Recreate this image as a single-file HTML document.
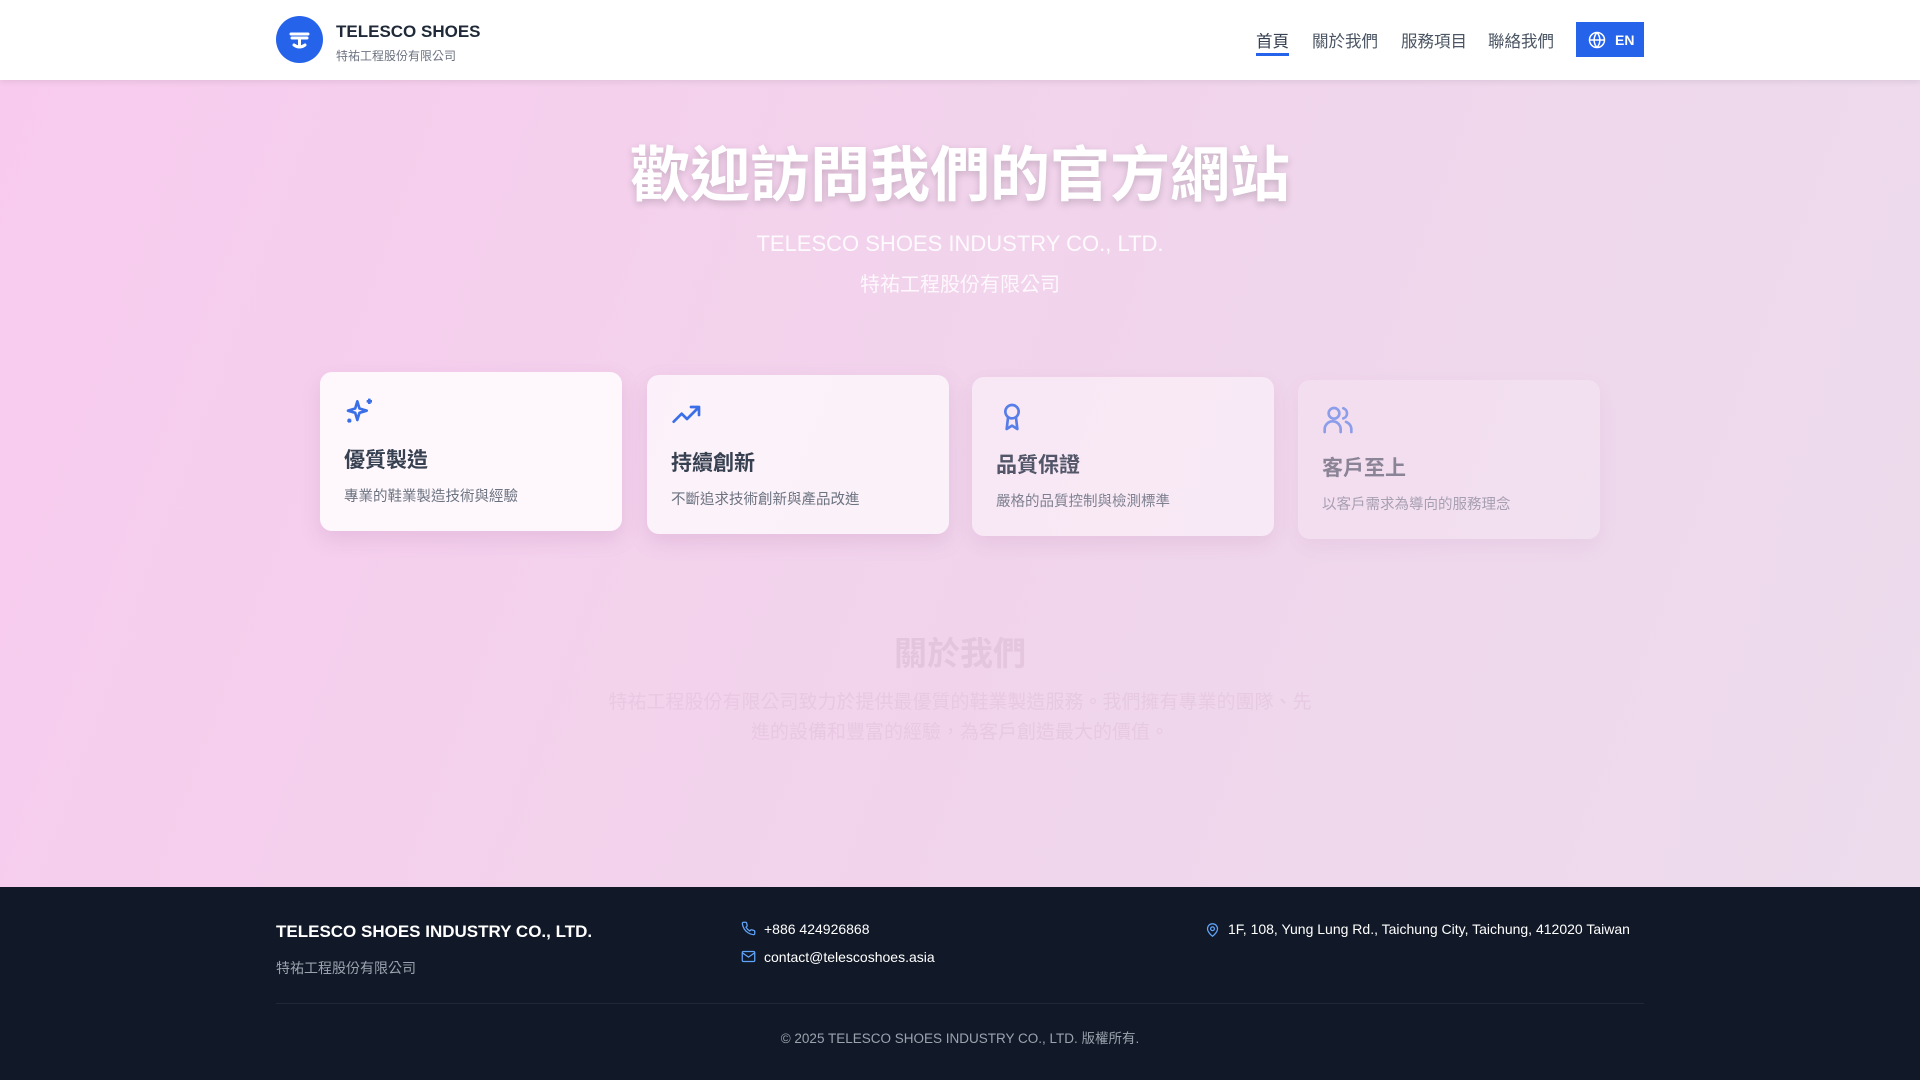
<!DOCTYPE html>
<html><head><meta charset="utf-8">
<style>
*{margin:0;padding:0;box-sizing:border-box}
body{width:1920px;height:1080px;overflow:hidden;font-family:"Liberation Sans","Noto Sans CJK TC",sans-serif;background:#111827}
.hdr{position:absolute;left:0;top:0;width:1920px;height:80px;background:#fff;box-shadow:0 2px 6px rgba(0,0,0,.08);z-index:5}
.logo{position:absolute;left:276px;top:16px;width:47px;height:47px;border-radius:50%;background:#2563eb}
.t1{position:absolute;left:336px;top:22px;font-size:17px;font-weight:bold;color:#1f2937}
.t2{position:absolute;left:336px;top:47px;font-size:12px;color:#6b7280}
.nav{position:absolute;top:28px;font-size:16.5px;color:#4b5563}
.en{position:absolute;left:1576px;top:22px;width:68px;height:35px;background:#2563eb;color:#fff;font-weight:bold;font-size:14px}
.hero{position:absolute;left:0;top:80px;width:1920px;height:807px;background:linear-gradient(110deg,#f8cbee 0%,#f2d3ec 45%,#ecdcec 100%)}
.h1{position:absolute;left:0;width:1920px;text-align:center;color:#fff}
.card{position:absolute;width:302px;height:159px;border-radius:12px;background:rgba(255,255,255,.8);box-shadow:0 8px 20px rgba(150,80,140,.15)}
.card svg{position:absolute;left:24px;top:24px}
.card .ct{position:absolute;left:24px;top:72px;font-size:21px;font-weight:bold;color:#374151}
.card .cd{position:absolute;left:24px;top:113px;font-size:14.5px;color:#6b7280}
.f{position:absolute;color:#fff}
</style></head><body>
<div class="hdr">
<div class="logo"><svg width="47" height="47" viewBox="0 0 47 47"><path d="M15 18h17M16 22h15M23.5 22v9M18 29q5.5 4 11 0" stroke="#fff" stroke-width="3" fill="none" stroke-linecap="round"/></svg></div>
<div class="t1">TELESCO SHOES</div>
<div class="t2">特祐工程股份有限公司</div>
<div class="nav" style="left:1256px;color:#374151">首頁<div style="height:3px;background:#2563eb;margin-top:1px"></div></div>
<div class="nav" style="left:1312px">關於我們</div>
<div class="nav" style="left:1401px">服務項目</div>
<div class="nav" style="left:1488px">聯絡我們</div>
<div class="en"><svg style="position:absolute;left:12px;top:9px" width="18" height="18" viewBox="0 0 24 24" fill="none" stroke="#fff" stroke-width="2"><circle cx="12" cy="12" r="10"/><path d="M2 12h20M12 2a15 15 0 0 1 0 20M12 2a15 15 0 0 0 0 20"/></svg><span style="position:absolute;left:39px;top:10px">EN</span></div>
</div>
<div class="hero">
<div class="h1" style="top:47px;font-size:60px;font-weight:bold;text-shadow:0 3px 8px rgba(0,0,0,.18)">歡迎訪問我們的官方網站</div>
<div class="h1" style="top:151px;font-size:22px;opacity:.9">TELESCO SHOES INDUSTRY CO., LTD.</div>
<div class="h1" style="top:188px;font-size:20px;opacity:.85">特祐工程股份有限公司</div>

<div class="card" style="left:320px;top:292px;background:rgba(255,255,255,.85)">
<svg width="32" height="32" viewBox="0 0 24 24" fill="none" stroke="#3b6fe8" stroke-width="2" stroke-linejoin="round"><path d="M10 4l1.6 5.4L17 11l-5.4 1.6L10 18l-1.6-5.4L3 11l5.4-1.6z"/><path d="M19 2v4M17 4h4M4 17v3M2.5 18.5h3"/></svg>
<div class="ct">優質製造</div><div class="cd">專業的鞋業製造技術與經驗</div></div>
<div class="card" style="left:647px;top:295px;background:rgba(255,255,255,.7)">
<svg width="32" height="32" viewBox="0 0 24 24" fill="none" stroke="#3b6fe8" stroke-width="2" stroke-linecap="round" stroke-linejoin="round"><path d="M2 17l6-6 4 4 9-9M15 6h6v6"/></svg>
<div class="ct">持續創新</div><div class="cd">不斷追求技術創新與產品改進</div></div>
<div class="card" style="left:972px;top:297px;background:rgba(255,255,255,.55);opacity:.85">
<svg width="32" height="32" viewBox="0 0 24 24" fill="none" stroke="#3b6fe8" stroke-width="2" stroke-linejoin="round"><circle cx="12" cy="8" r="5"/><path d="M9 12.5L8 21l4-2.5 4 2.5-1-8.5"/></svg>
<div class="ct">品質保證</div><div class="cd">嚴格的品質控制與檢測標準</div></div>
<div class="card" style="left:1298px;top:300px;background:rgba(255,255,255,.35);opacity:.55">
<svg width="32" height="32" viewBox="0 0 24 24" fill="none" stroke="#3b6fe8" stroke-width="2" stroke-linecap="round"><circle cx="9" cy="7" r="4"/><path d="M2 21v-2a6 6 0 0 1 12 0v2M16 3.2a4 4 0 0 1 0 7.6M22 21v-2a6 6 0 0 0-4-5.6"/></svg>
<div class="ct">客戶至上</div><div class="cd">以客戶需求為導向的服務理念</div></div>

<div class="h1" style="top:547px;font-size:33px;font-weight:bold;color:#d9b8d2;opacity:.5">關於我們</div>
<div class="h1" style="top:608px;font-size:19px;line-height:30px;color:#dcbcd6;opacity:.45;width:720px;left:600px">特祐工程股份有限公司致力於提供最優質的鞋業製造服務。我們擁有專業的團隊、先進的設備和豐富的經驗，為客戶創造最大的價值。</div>
</div>

<div class="f" style="left:276px;top:922px;font-size:17px;font-weight:bold">TELESCO SHOES INDUSTRY CO., LTD.</div>
<div class="f" style="left:276px;top:958px;font-size:14px;color:#9ca3af">特祐工程股份有限公司</div>
<svg style="position:absolute;left:741px;top:921px" width="15" height="15" viewBox="0 0 24 24" fill="none" stroke="#60a5fa" stroke-width="2"><path d="M22 16.9v3a2 2 0 0 1-2.2 2 19.8 19.8 0 0 1-8.6-3.1 19.5 19.5 0 0 1-6-6A19.8 19.8 0 0 1 2.1 4.2 2 2 0 0 1 4.1 2h3a2 2 0 0 1 2 1.7c.1 1 .4 1.9.7 2.8a2 2 0 0 1-.5 2.1L8 9.9a16 16 0 0 0 6 6l1.3-1.3a2 2 0 0 1 2.1-.4c.9.3 1.8.6 2.8.7a2 2 0 0 1 1.7 2z"/></svg>
<div class="f" style="left:764px;top:921px;font-size:14px">+886 424926868</div>
<svg style="position:absolute;left:741px;top:949px" width="15" height="15" viewBox="0 0 24 24" fill="none" stroke="#60a5fa" stroke-width="2"><rect x="2" y="4" width="20" height="16" rx="2"/><path d="M2 6l10 7 10-7"/></svg>
<div class="f" style="left:764px;top:949px;font-size:14px">contact@telescoshoes.asia</div>
<svg style="position:absolute;left:1205px;top:922px" width="15" height="16" viewBox="0 0 24 24" fill="none" stroke="#60a5fa" stroke-width="2"><path d="M20 10c0 6-8 12-8 12s-8-6-8-12a8 8 0 0 1 16 0z"/><circle cx="12" cy="10" r="3"/></svg>
<div class="f" style="left:1228px;top:921px;font-size:14px">1F, 108, Yung Lung Rd., Taichung City, Taichung, 412020 Taiwan</div>
<div style="position:absolute;left:276px;top:1003px;width:1368px;height:1px;background:#1f2937"></div>
<div class="f" style="left:0;width:1920px;text-align:center;top:1027px;font-size:13.5px;color:#9ca3af">© 2025 TELESCO SHOES INDUSTRY CO., LTD. 版權所有.</div>
</body></html>
